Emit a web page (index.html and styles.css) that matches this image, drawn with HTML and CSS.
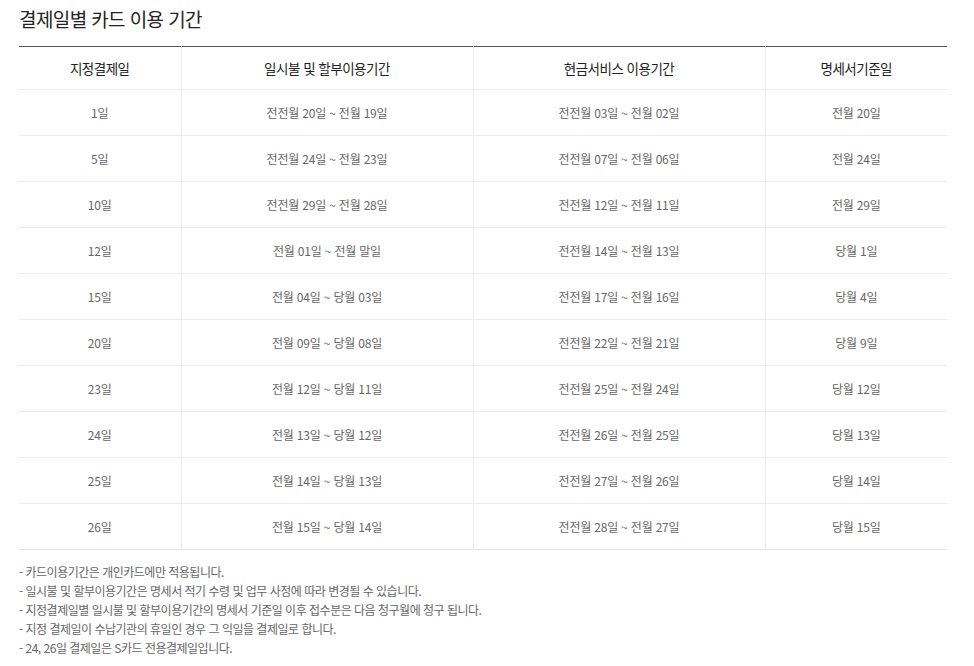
FILE: index.html
```html
<!DOCTYPE html>
<html lang="ko">
<head>
<meta charset="utf-8">
<link rel="stylesheet" href="styles.css">
</head>
<body>
<div class="wrap">
  <h2 class="title">결제일별 카드 이용 기간</h2>
  <table class="period">
    <colgroup>
      <col class="c1"><col class="c2"><col class="c3"><col class="c4">
    </colgroup>
    <thead>
      <tr><th>지정결제일</th><th>일시불 및 할부이용기간</th><th>현금서비스 이용기간</th><th>명세서기준일</th></tr>
    </thead>
    <tbody>
      <tr><td>1일</td><td>전전월 20일 ~ 전월 19일</td><td>전전월 03일 ~ 전월 02일</td><td>전월 20일</td></tr>
      <tr><td>5일</td><td>전전월 24일 ~ 전월 23일</td><td>전전월 07일 ~ 전월 06일</td><td>전월 24일</td></tr>
      <tr><td>10일</td><td>전전월 29일 ~ 전월 28일</td><td>전전월 12일 ~ 전월 11일</td><td>전월 29일</td></tr>
      <tr><td>12일</td><td>전월 01일 ~ 전월 말일</td><td>전전월 14일 ~ 전월 13일</td><td>당월 1일</td></tr>
      <tr><td>15일</td><td>전월 04일 ~ 당월 03일</td><td>전전월 17일 ~ 전월 16일</td><td>당월 4일</td></tr>
      <tr><td>20일</td><td>전월 09일 ~ 당월 08일</td><td>전전월 22일 ~ 전월 21일</td><td>당월 9일</td></tr>
      <tr><td>23일</td><td>전월 12일 ~ 당월 11일</td><td>전전월 25일 ~ 전월 24일</td><td>당월 12일</td></tr>
      <tr><td>24일</td><td>전월 13일 ~ 당월 12일</td><td>전전월 26일 ~ 전월 25일</td><td>당월 13일</td></tr>
      <tr><td>25일</td><td>전월 14일 ~ 당월 13일</td><td>전전월 27일 ~ 전월 26일</td><td>당월 14일</td></tr>
      <tr><td>26일</td><td>전월 15일 ~ 당월 14일</td><td>전전월 28일 ~ 전월 27일</td><td>당월 15일</td></tr>
    </tbody>
  </table>
  <ul class="notes">
    <li>- 카드이용기간은 개인카드에만 적용됩니다.</li>
    <li>- 일시불 및 할부이용기간은 명세서 적기 수령 및 업무 사정에 따라 변경될 수 있습니다.</li>
    <li>- 지정결제일별 일시불 및 할부이용기간의 명세서 기준일 이후 접수분은 다음 청구월에 청구 됩니다.</li>
    <li>- 지정 결제일이 수납기관의 휴일인 경우 그 익일을 결제일로 합니다.</li>
    <li>- 24, 26일 결제일은 S카드 전용결제일입니다.</li>
  </ul>
</div>
</body>
</html>
```
FILE: styles.css
```css
html, body {
  margin: 0;
  padding: 0;
  background: #fff;
}
body {
  font-family: "Noto Sans CJK KR", "Noto Sans", sans-serif;
  color: #666;
}
.wrap {
  width: 928px;
  margin-left: 19px;
}
.title {
  margin: 0;
  padding-top: 5px;
  height: 46px;
  box-sizing: border-box;
  font-size: 19px;
  line-height: 28px;
  font-weight: 400;
  color: #222;
  letter-spacing: -0.6px;
}
.period {
  width: 928px;
  border-collapse: collapse;
  table-layout: fixed;
  border-top: 1px solid #555;
  border-bottom: 1px solid #e2e2e2;
}
.c1 { width: 162px; }
.c2 { width: 292px; }
.c3 { width: 292px; }
.c4 { width: 182px; }
.period th, .period td {
  padding: 0;
  text-align: center;
  border-bottom: 1px solid #ececec;
  border-left: 1px solid #ececec;
}
.period th:first-child, .period td:first-child {
  border-left: 0;
}
.period th {
  height: 42px;
  font-size: 13.5px;
  font-weight: 400;
  color: #222;
  letter-spacing: -0.5px;
}
.period td {
  height: 45px;
  font-size: 12px;
  color: #666;
  letter-spacing: -0.2px;
}
.period tbody tr:last-child td {
  border-bottom: 0;
}
.notes {
  list-style: none;
  margin: 0;
  padding: 12px 0 0;
  font-size: 12px;
  line-height: 19px;
  color: #666;
  letter-spacing: -0.5px;
}
```
